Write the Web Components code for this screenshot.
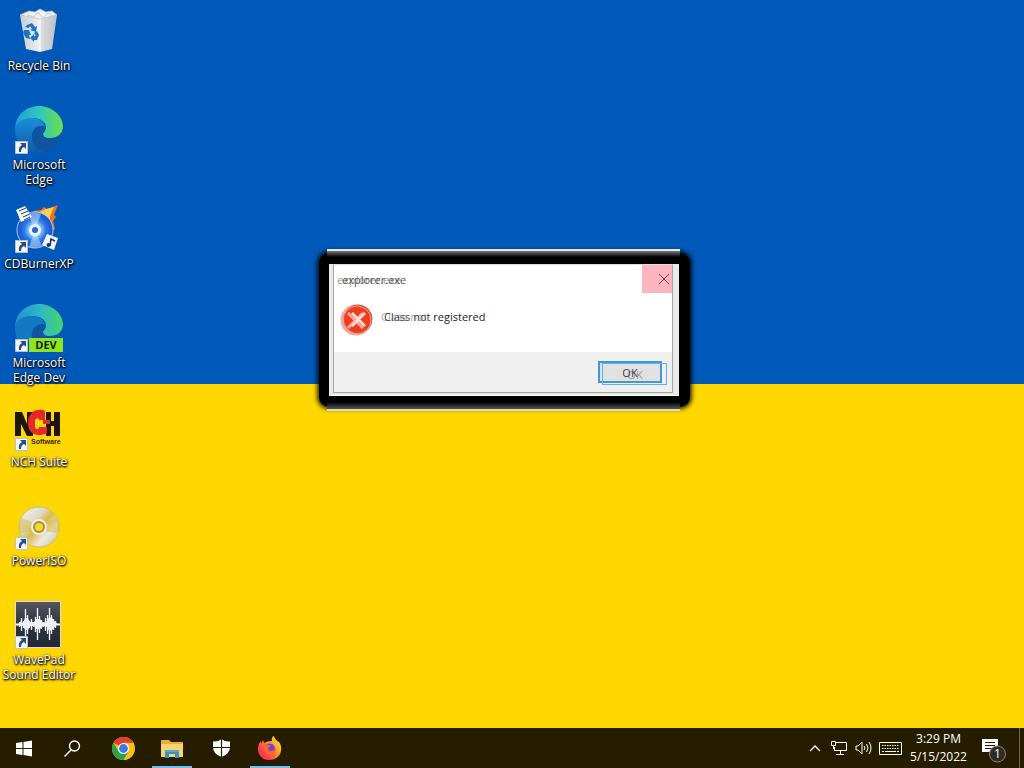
<!DOCTYPE html>
<html lang="en">
<head>
<meta charset="utf-8">
<title>Desktop</title>
<style>
html, body { margin: 0; height: 100%; }
body { font-family: "Open Sans", "Noto Sans", sans-serif; overflow: hidden; }
</style>
</head>
<body>
<desktop-shell></desktop-shell>

<template id="shell">
<style>
:host { display: flex; flex-direction: column; position: relative; min-height: 100vh; background: linear-gradient(#0058b8 50%, #fed600 50%); }
nav { flex: 1; display: flex; flex-direction: column; align-items: flex-start; }
error-dialog { position: absolute; left: 327px; top: 249px; }
svg { display: block; width: 48px; height: 48px; overflow: visible; }
</style>
<nav aria-label="Desktop icons">
<desktop-icon label="Recycle Bin">
<svg viewBox="0 0 48 48"><defs><linearGradient id="bin"><stop stop-color="#c9cdd2"/><stop offset=".55" stop-color="#f1f1f1"/><stop offset=".56" stop-color="#dcdedf"/><stop offset="1" stop-color="#b9bfc6"/></linearGradient></defs>
<path d="M5 8 25 11 42 8 37 42 25 45 11 42Z" fill="url(#bin)"/><path d="M5 8 14 4 20 5 25 2 31 5 37 4 42 8 25 12Z" fill="#eef1f3" stroke="#b9c3cc" stroke-width=".7"/><path d="m12 8 7 2 4-5 5 6 5-5 5 3" fill="none" stroke="#c4cbd2"/><path d="M25 12v32" stroke="#fafafa"/>
<g fill="#1876c9"><path d="m12 18 5-2 3 4 2-1-1 6-6-2 2-1-2-3-1 2-4-1z"/><path d="m9 23 5 0 2 5-2 0 1 4-4-1-3-5z"/><path d="m22 24 2 4-2 5h-3v2l-4-4 4-4v2h2l-2-3z"/></g></svg>
</desktop-icon>
<desktop-icon label="Microsoft Edge" shortcut>
<svg viewBox="0 0 48 48"><defs><linearGradient id="ea"><stop stop-color="#1e9ee0"/><stop offset=".5" stop-color="#2ec7bd"/><stop offset="1" stop-color="#6ce04a"/></linearGradient><linearGradient id="eb" x2="0" y2="1"><stop stop-color="#1b8fdb"/><stop offset="1" stop-color="#0c5aa8"/></linearGradient></defs>
<path d="M0 24C0 9 11 0 24 0s24 10 24 20c0 8-6 12-13 12-6 0-7-2-7-4s3-2 3-7c0-5-6-9-13-9S0 18 0 24Z" fill="url(#ea)"/><path d="M0 24c0-7 7-12 16-12s14 5 14 9c-5-3-13 1-13 10 0 8 7 14 15 16C16 51 0 39 0 24Z" fill="url(#eb)"/><path d="M17 31c0-8 6-13 13-10 1 4-2 5-2 7 0 3 4 5 8 5 5 0 9-3 10-2 1 2-6 13-15 15-9-1-14-8-14-15Z" fill="#1054a0"/></svg>
</desktop-icon>
<desktop-icon label="CDBurnerXP" shortcut>
<svg viewBox="0 0 48 48"><defs><radialGradient id="cd"><stop offset=".25" stop-color="#aee0ff"/><stop offset=".6" stop-color="#2c79ea"/><stop offset="1" stop-color="#1750c4"/></radialGradient></defs>
<path d="m18 6 8-1 3-3 3 2 11-4-4 10 2 2-3 4 2 8-9 7z" fill="#f07518"/><path d="m22 8 9-4 8-2-4 9v9z" fill="#ffcf5c"/><circle cx="20" cy="25" r="18" fill="url(#cd)" stroke="#9fd0fa"/><path d="m20 25-7-16q8-3 13 0zM20 25l7 16q-7 3-13 1z" fill="#c9ecff" opacity=".5"/><circle cx="20" cy="25" r="6" fill="#eaf7ff"/><circle cx="20" cy="25" r="3" fill="#2667d6"/>
<path d="m1 5 9-4 7 11-11 5z" fill="#f4f7fb"/><path d="m4 6 7-3M6 9l7-3M8 12l7-3M9 15l6-3" stroke="#26417f"/><path d="m32 29 11 4-4 12-12-5z" fill="#f4f7fb"/><path d="m35 41 1-7 4 2" fill="none" stroke="#17366f" stroke-width="1.6"/><circle cx="33.500" cy="40" r="2" fill="#17366f"/></svg>
</desktop-icon>
<desktop-icon label="Microsoft Edge Dev" shortcut>
<svg viewBox="0 0 48 48"><defs><linearGradient id="da"><stop stop-color="#1f91d2"/><stop offset=".5" stop-color="#2eb6c9"/><stop offset="1" stop-color="#45d56b"/></linearGradient></defs>
<path d="M0 24C0 9 11 0 24 0s24 10 24 20c0 8-6 12-13 12-6 0-7-2-7-4s3-2 3-7c0-5-6-9-13-9S0 18 0 24Z" fill="url(#da)"/><path d="M0 24c0-7 7-12 16-12s14 5 14 9c-5-3-13 1-13 10v6H3Q0 31 0 24Z" fill="#1279c2"/><path d="M17 35c-2-9 6-17 13-14 1 4-2 5-2 7 0 3 4 5 8 5v2z" fill="#10539f"/><path d="M14 34h34v14H14z" fill="#8ee51c"/><text x="31" y="45" text-anchor="middle" font-size="11" font-weight="700" fill="#17210a">DEV</text></svg>
</desktop-icon>
<desktop-icon label="NCH Suite" shortcut>
<svg viewBox="0 0 48 48"><g fill="#1b160e"><path d="M0 9h7l5 12V9h6v24h-6L6 21v12H0zM31 9h5v9h3V9h6v24h-6v-10h-3v10h-5z"/></g><path d="M30 8v9h-6c0-3-4-2-4 1v5c0 4 4 4 4 1h8v6q-3 2-9 2c-7-1-10-5-10-12S17 7 23 7q4-1 7 1Z" fill="#e5292b"/><path d="M28 17h7v4h-7z" fill="#e5292b"/><text x="16" y="41" font-family="Liberation Sans" font-size="7" font-weight="700" fill="#30280c">Software</text></svg>
</desktop-icon>
<desktop-icon label="PowerISO" shortcut>
<svg viewBox="0 0 48 48"><defs><linearGradient id="po" x2="1" y2="1"><stop stop-color="#fafafa"/><stop offset=".35" stop-color="#dedac9"/><stop offset=".5" stop-color="#d7bb47"/><stop offset=".7" stop-color="#eeeade"/><stop offset="1" stop-color="#bcb8ab"/></linearGradient></defs><circle cx="24" cy="25" r="20" fill="url(#po)" stroke="#c6bd94"/><path d="m7 16 12 5q-2 4 0 8L5 31q-3-8 2-15ZM41 16l-12 5q2 4 0 8l14 2q3-8-2-15Z" fill="#d8b939" opacity=".5"/><circle cx="24" cy="25" r="8" fill="#f1eee1"/><circle cx="24" cy="25" r="5" fill="#ffda11" stroke="#988b5b" stroke-width="2"/></svg>
</desktop-icon>
<desktop-icon label="WavePad Sound Editor" shortcut>
<svg viewBox="0 0 48 48"><defs><linearGradient id="wa" x2="0" y2="1"><stop stop-color="#54565f"/><stop offset=".5" stop-color="#303440"/><stop offset="1" stop-color="#202735"/></linearGradient></defs><path d="M.5.500h45v46H.5z" fill="url(#wa)" stroke="#d9dce0"/><path d="M1 23.500h44" stroke="#fff" stroke-width="2"/><path d="M4.500 21v5M6.500 17v13M8.500 20v7M10.500 8v31M12.500 14v19M14.500 20v7M16.500 18v11M18.500 21v5M20.500 16v15M22.500 7v32M24.500 15v17M26.500 19v9M28.500 21v5M30.500 17v13M32.500 14v19M34.500 7v32M36.500 14v19M38.500 18v11M40.500 20v7" stroke="#f6f8fb" stroke-width="1.300"/><path d="M3 23.500 6 20l2 2 2-5 3 0 2 4 4 0 2-3 4 0 3 4 4-2 2-4 3 1 3 4 3 2-3 2-3 4-3 1-2-4-4-1-3 3-4 0-2-3-4 0-2 4-3 0-2-5-2 1z" fill="#eef1f6"/></svg>
</desktop-icon>
</nav>
<error-dialog caption="explorer.exe"></error-dialog>
<task-bar></task-bar>
</template>

<template id="icon">
<style>
:host { display: block; width: 78px; height: 99px; }
a { display: flex; flex-direction: column; align-items: center; gap: 3px; padding-top: 7px; color: #fff; text-decoration: none; font-size: 12px; line-height: 15px; text-align: center; text-shadow: 0 1px 2px #000, 1px 1px 2px #000, 0 0 2px #0008; }
.art { position: relative; width: 48px; height: 48px; text-shadow: none; }
.arrow { display: none; position: absolute; left: 0; bottom: 0; width: 13px; height: 13px; }
:host([shortcut]) .arrow { display: block; }
.label { width: 76px; }
</style>
<a href="#"><span class="art"><slot></slot><svg class="arrow" viewBox="0 0 13 13"><path d="M.5.500h12v12H.5z" fill="#f6f8fb" stroke="#b7c1d0"/><path d="M5 2h6v6L9 6q-3 1-3 5H4q-1-5 3-7z" fill="#284c89"/></svg></span><span class="label"></span></a>
</template>

<template id="dialog">
<style>
:host { display: block; box-sizing: border-box; z-index: 1; width: 353px; padding: 15px 1px 15px 2px; color: #222; font-size: 11px; }
:host::before { content: ""; position: absolute; z-index: -1; inset: 4px -10px 4px -8px; border-radius: 10px; background: #000; box-shadow: 0 0 4px 2px #000c; }
:host::after { content: ""; position: absolute; z-index: -1; inset: 0; border-top: 2px solid #e6eaf0; border-bottom: 2px solid #d8d8c8; background: linear-gradient(#777, #000 6px, #000 151px, #555); background-clip: padding-box; }
section { padding: 0 6px 2px 4px; background: #e9e9e9; border-bottom: 1px solid #fff; box-sizing: border-box; }
.window { border: 1px solid #a3a3a3; border-top-color: #ddd; background: #fff; }
header { display: flex; align-items: center; justify-content: space-between; height: 28px; padding-left: 8px; }
h1 { margin: 0; font-size: 11px; font-weight: 400; color: #555; text-shadow: -5px 0 #999; }
.close { width: 30px; height: 28px; padding: 0; border: 0; background: #ffb5c0; }
.close svg { display: block; margin-left: 16px; }
.body { display: flex; align-items: flex-start; gap: 10px; height: 48px; padding: 11px 7px 0 6px; }
.body svg { flex: none; }
p { margin: 4px 0 0; line-height: 18px; }
.ghost { color: #444; text-shadow: -3px 0 #aaa; }
footer { display: flex; justify-content: flex-end; height: 31px; padding: 9px 10px 0 0; background: #f0f0f0; }
.ok { position: relative; width: 64px; height: 22px; padding: 0; border: 2px solid #4297db; background: #e1e1e1; color: #444; font: inherit; text-shadow: 5px 2px #999; }
.ok::after { content: ""; position: absolute; inset: 0 -7px -4px 2px; border: 1px solid #67b1ed; }
</style>
<section role="alertdialog" aria-labelledby="cap"><div class="window">
<header><h1 id="cap"></h1><button class="close" aria-label="Close"><svg width="13" height="12" viewBox="0 0 13 12"><path d="m1 1 10 10M11 1 1 11" stroke="#743e48"/></svg></button></header>
<div class="body"><svg width="34" height="32" viewBox="0 0 34 32"><circle cx="16" cy="16" r="15.500" fill="#f1aaa0"/><circle cx="18" cy="15" r="14" fill="#ed3e1d" stroke="#d75343"/><circle cx="17" cy="16" r="14" fill="none" stroke="#f69c8c"/><path d="m8 9 15 15m0-15L8 24" stroke="#f4aa9e" stroke-width="3"/><path d="m12 9 13 13m0-13L12 22" stroke="#ffded7" stroke-width="2.500"/></svg><p><span class="ghost">Class not</span> registered</p></div>
<footer><button class="ok">OK</button></footer>
</div></section>
</template>

<template id="bar">
<style>
:host { display: flex; height: 40px; background: #261d00; color: #fff; }
button { display: grid; place-items: center; box-sizing: border-box; height: 40px; padding: 0; border: 0; background: none; color: inherit; font: 12px/18px "Open Sans", "Noto Sans", sans-serif; }
svg { display: block; }
.start { width: 48px; }
.app { width: 40px; margin-left: 9px; }
.gap { margin-left: 7px; }
.running { box-shadow: inset 0 -2px #76b9ed; }
.tray { display: flex; margin-left: auto; }
.t { width: 24px; }
.keys { width: 30px; }
.clock { width: 67px; }
.note { width: 44px; padding-top: 4px; }
.peek { width: 5px; border-left: 1px solid #70694f; margin-left: 3px; }
</style>
<button class="start" aria-label="Start"><svg width="16" height="17" viewBox="0 0 16 17"><path d="m0 3 6.500-1v6H0zM7.500 2 16 .5V8H7.500zM0 9h6.500v6L0 14zM7.500 9H16v7.500L7.500 15z" fill="#fff"/></svg></button>
<button class="start" aria-label="Search"><svg width="17" height="17" viewBox="0 0 17 17" fill="none" stroke="#fff" stroke-width="1.400"><circle cx="10.500" cy="6" r="5"/><path d="M7 10 .5 16.500"/></svg></button>
<button class="app gap" aria-label="Chrome"><svg width="23" height="23" viewBox="0 0 24 24"><circle cx="12" cy="12" r="12" fill="#fbc116"/><path d="M12 12 1.600 6A12 12 0 0 1 22.400 6H12z" fill="#e33b2e"/><path d="m12 12 5.200 3L12 24A12 12 0 0 1 1.600 6l5.200 9z" fill="#2ba24c"/><circle cx="12" cy="12" r="5.800" fill="#fff"/><circle cx="12" cy="12" r="4.600" fill="#3979e8"/></svg></button>
<button class="app running" aria-label="File Explorer"><svg width="22" height="19" viewBox="0 0 22 19"><path d="M0 1h8l2 2h12v15H0z" fill="#e9af35"/><path d="M0 5h22v13H0z" fill="#f5d470"/><path d="M4 11h14v8h-4v-4H8v4H4z" fill="#3b93bd"/><path d="M4 11h14v2H4z" fill="#5aabc8"/></svg></button>
<button class="app" aria-label="Windows Security"><svg width="17" height="18" viewBox="0 0 17 18"><path d="M8.500 0Q12 3 17 2.500V8q0 7-8.500 10Q0 15 0 8V2.500Q5 3 8.500 0Z" fill="#fff"/><path d="M8.500 0v18M0 8.500h17" stroke="#261d00" stroke-width="1.200"/></svg></button>
<button class="app running" aria-label="Firefox"><svg width="24" height="24" viewBox="0 0 24 24"><defs><linearGradient id="fx" x1="1" x2="0" y2="1"><stop stop-color="#fff04e"/><stop offset=".4" stop-color="#ff9d27"/><stop offset=".72" stop-color="#ff4146"/><stop offset="1" stop-color="#e62780"/></linearGradient></defs><path d="M14 5q-1-4 2-5 1 4 5 6 3 4 2 9c-1 6-6 9-12 9C4 24 0 19 0 13q0-5 3-8v3l2-4 1 3q3-2 8-2Z" fill="url(#fx)"/><circle cx="12" cy="12.500" r="5" fill="#7542d3"/><path d="M5 9q3-2 5 0l3 1-3 2q0 3 4 3 4-1 3-5 3 8-4 9-7 0-8-10Z" fill="#ff652e"/></svg></button>
<div class="tray">
<button class="t" aria-label="Show hidden icons"><svg width="12" height="7" viewBox="0 0 12 7"><path d="m1 6 5-5 5 5" fill="none" stroke="#fff" stroke-width="1.400"/></svg></button>
<button class="t" aria-label="Network"><svg width="16" height="14" viewBox="0 0 16 14" fill="none" stroke="#fff"><path d="M5 1.500h10.500v8H3.500V6M9.500 9.500v4M5 13.500h8M.5.500h4v4h-4zM2.500 5v3"/></svg></button>
<button class="t" aria-label="Volume"><svg width="17" height="14" viewBox="0 0 17 14" fill="none" stroke="#fff"><path d="M1 5h2l4-4v12L3 9H1zM9 5q2 2 0 4M11.500 3q3 4 0 8M14 1q4 6 0 12"/></svg></button>
<button class="keys" aria-label="Touch keyboard"><svg width="23" height="13" viewBox="0 0 23 13" fill="none" stroke="#fff"><path d="M.5.500h22v12H.5z"/><path d="M3 3.500h17M3 6.500h17" stroke-dasharray="1.500 1"/><path d="M3 9.500h2m1 0h11m1 0h2"/></svg></button>
<button class="clock"><span>3:29 PM<br>5/15/2022</span></button>
<button class="note" aria-label="1 new notification"><svg width="26" height="25" viewBox="0 0 26 25"><path d="M1 1h16v13h-5l-3 3v-3H1z" fill="#fff"/><path d="M4 4.500h10M4 7.500h10M4 10.500h7" stroke="#261d00"/><circle cx="16.500" cy="16" r="8" fill="#302c24" stroke="#8b8878"/><text x="16.500" y="20" font-size="12" fill="#fff" text-anchor="middle">1</text></svg></button>
<button class="peek" aria-label="Show desktop"></button>
</div>
</template>

<script>
class TemplateElement extends HTMLElement {
  constructor() {
    super();
    const id = this.constructor.template;
    this.attachShadow({ mode: 'open' }).append(document.getElementById(id).content.cloneNode(true));
  }
}
customElements.define('desktop-icon', class extends TemplateElement {
  static template = 'icon';
  connectedCallback() { this.shadowRoot.querySelector('.label').textContent = this.getAttribute('label'); }
});
customElements.define('error-dialog', class extends TemplateElement {
  static template = 'dialog';
  connectedCallback() { this.shadowRoot.querySelector('h1').textContent = this.getAttribute('caption'); }
});
customElements.define('task-bar', class extends TemplateElement { static template = 'bar'; });
customElements.define('desktop-shell', class extends TemplateElement { static template = 'shell'; });
</script>
</body>
</html>
